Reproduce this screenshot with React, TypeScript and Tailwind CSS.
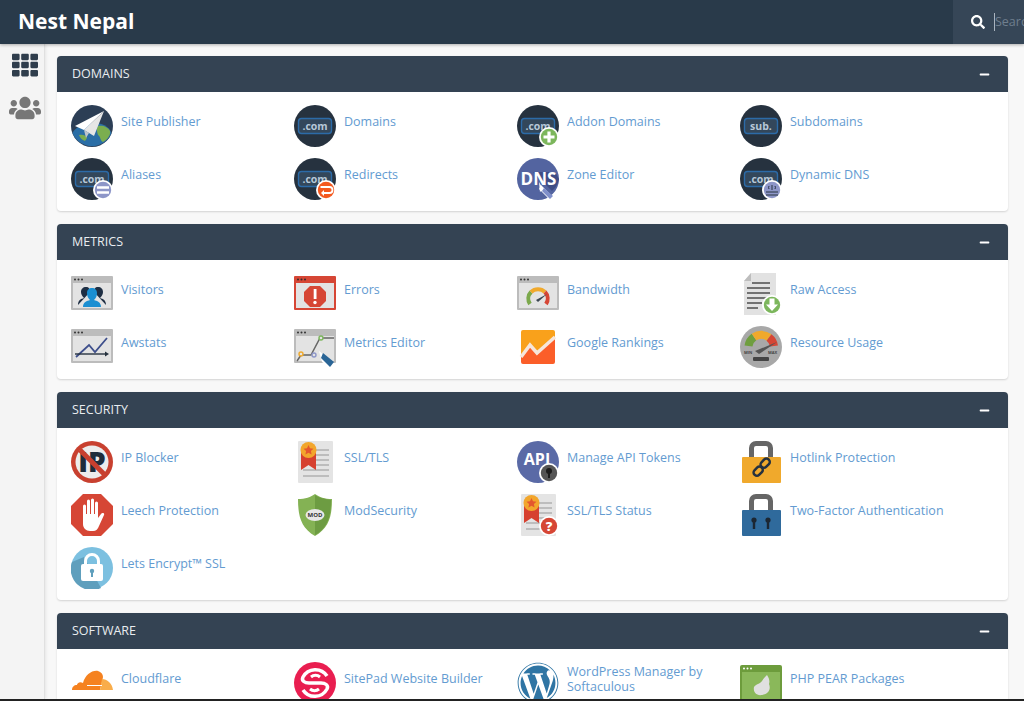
import type { ReactNode } from "react"
import { FaMinus, FaSearch, FaTh, FaUsers, FaWordpress } from "react-icons/fa"

function Icon({ children }: { children: ReactNode }) {
  return (
    <svg viewBox="0 0 42 42" className="h-[42px] w-[42px] shrink-0">
      {children}
    </svg>
  )
}

function Badge({ fill, children }: { fill: string; children?: ReactNode }) {
  return (
    <>
      <circle cx="32" cy="32" r="10" fill="#fff" />
      <circle cx="32" cy="32" r="8.2" fill={fill} />
      {children}
    </>
  )
}

function ComBase({ label = ".com" }: { label?: string }) {
  return (
    <>
      <circle cx="21" cy="21" r="21" fill="#26323f" />
      <rect x="4.5" y="13.5" width="33" height="15" rx="3" fill="#33475b" stroke="#2c6ba8" strokeWidth="1.4" />
      <text x="21" y="25" textAnchor="middle" fontSize="10.5" fontWeight="700" fill="#b7c8d8" fontFamily="Open Sans, sans-serif">
        {label}
      </text>
    </>
  )
}

function Win({ frame = "#bcbcbc", inner = "#e3e3e3", dots = "#333", children }: { frame?: string; inner?: string; dots?: string; children?: ReactNode }) {
  return (
    <>
      <rect x="0" y="3" width="42" height="34" rx="1" fill={frame} />
      <rect x="2" y="10" width="38" height="25" fill={inner} />
      <circle cx="4" cy="6.5" r="1" fill={dots} />
      <circle cx="7.5" cy="6.5" r="1" fill={dots} />
      <circle cx="11" cy="6.5" r="1" fill={dots} />
      {children}
    </>
  )
}

function Cert({ children }: { children?: ReactNode }) {
  return (
    <>
      <rect x="4" y="0" width="35" height="42" rx="1" fill="#e4e4e4" />
      <g stroke="#b0b0b0" strokeWidth="1.6">
        <path d="M21 9h14M21 14h14M21 19h14M21 24h14M9 29h26M9 35h26" />
      </g>
      <path d="M7 11h15v18l-7.500-5-7.500 5z" fill="#d6402f" />
      <circle cx="14.500" cy="9" r="8" fill="#f2a62c" />
      <path d="M14.500 4l1.500 3.300 3.500.4-2.600 2.400.7 3.500-3.100-1.800-3.100 1.800.7-3.500-2.600-2.400 3.500-.4z" fill="#e4572e" />
    </>
  )
}

function Lock({ body, children }: { body: string; children: ReactNode }) {
  return (
    <>
      <path d="M11.500 17V7a4.500 4.500 0 0 1 4.500-4.500h10a4.500 4.500 0 0 1 4.500 4.500v10" fill="none" stroke="#666" strokeWidth="5" />
      <rect x="2" y="16" width="39" height="26" rx="1" fill={body} />
      {children}
    </>
  )
}

const icons: Record<string, ReactNode> = {
  publisher: (
    <Icon>
      <circle cx="21" cy="21" r="21" fill="#2c3e55" />
      <path d="M1.500 28C6 18 34 12 40.500 28A21 21 0 0 1 1.500 28z" fill="#2a6ea6" />
      <path d="M27 21c5-1 10 1 12 5 1 4-3 9-7 11-3-1-2-5-5-7-1-3-2-6 0-9zM8 30c3-1 7 0 8 3l-2 3c-3-1-5-3-6-6z" fill="#7bae4f" />
      <path d="M33 6L4 21l9 4z" fill="#fff" />
      <path d="M33 6L13 25l10 6z" fill="#e6e6e6" />
      <path d="M13 25l2 8 3-5z" fill="#bfc5cc" />
    </Icon>
  ),
  domains: <Icon><ComBase /></Icon>,
  addon: (
    <Icon>
      <ComBase />
      <Badge fill="#7cb65c">
        <path d="M32 26.500v11M26.500 32h11" stroke="#fff" strokeWidth="3.200" />
      </Badge>
    </Icon>
  ),
  sub: <Icon><ComBase label="sub." /></Icon>,
  aliases: (
    <Icon>
      <ComBase />
      <Badge fill="#8d96c8">
        <path d="M26 29.500h12M26 34.500h12" stroke="#fff" strokeWidth="2.600" />
      </Badge>
    </Icon>
  ),
  redirects: (
    <Icon>
      <ComBase />
      <Badge fill="#f4591f">
        <path d="M26.500 29h9a2.500 2.500 0 0 1 0 6h-6" fill="none" stroke="#fff" strokeWidth="1.800" />
        <path d="M30 32l-3 3 3 3z" fill="#fff" />
      </Badge>
    </Icon>
  ),
  dns: (
    <Icon>
      <circle cx="21" cy="21" r="21" fill="#5364a0" />
      <path d="M35 33L16 14h22l4 7a21 21 0 0 1-7 12z" fill="#3f4d85" />
      <text x="21.500" y="27" textAnchor="middle" fontSize="17" fontWeight="700" fill="#fff" fontFamily="Open Sans, sans-serif">
        DNS
      </text>
      <path d="M22 24l1 10 3-3z" fill="#fff" />
      <path d="M24 27l11 11-3 3-10-10z" fill="#fff" />
      <path d="M27 30l9 8-3 3-8-8z" fill="#7f8fca" />
    </Icon>
  ),
  dynamic: (
    <Icon>
      <ComBase />
      <Badge fill="#8d96c8">
        <path d="M32 27v5M29 28a3 3 0 0 0 0 3M35 28a3 3 0 0 1 0 3M26 34h12M26 37h12" fill="none" stroke="#26323f" strokeWidth="1" />
      </Badge>
    </Icon>
  ),
  visitors: (
    <Icon>
      <Win>
        <path d="M7 32c0-5 3-6 6-7-2-2-3-4-3-6 0-3 2-5 5-5s4 2 4 5zM35 32c0-5-3-6-6-7 2-2 3-4 3-6 0-3-2-5-5-5s-4 2-4 5z" fill="#1f2f44" />
        <path d="M12 34c0-5 4-6 7-7-2-2-3-4-3-7 0-3 2-5 5-5s5 2 5 5c0 3-1 5-3 7 3 1 7 2 7 7z" fill="#1b8fd2" />
      </Win>
    </Icon>
  ),
  errors: (
    <Icon>
      <Win frame="#d64635" dots="#2f2f2f">
        <path d="M16 13h10l6 6v9l-6 6H16l-6-6v-9z" fill="#d64635" />
        <rect x="19.700" y="16" width="2.800" height="10" fill="#fff" />
        <circle cx="21" cy="29.500" r="1.700" fill="#fff" />
      </Win>
    </Icon>
  ),
  bandwidth: (
    <Icon>
      <Win>
        <path d="M13 31a9.500 9.500 0 0 1 1-12" fill="none" stroke="#7ba84b" strokeWidth="4" />
        <path d="M14 19a10 10 0 0 1 14 0" fill="none" stroke="#f0a92c" strokeWidth="4" />
        <path d="M28 19a9.500 9.500 0 0 1 1 12" fill="none" stroke="#d64635" strokeWidth="4" />
        <path d="M19 27l11-6-9 8z" fill="#3b4651" />
      </Win>
    </Icon>
  ),
  raw: (
    <Icon>
      <path d="M11 0h25v42H4V8z" fill="#e2e2e2" />
      <path d="M11 0v8H4z" fill="#bdbdbd" />
      <path d="M12 10h18M7 15h23M7 20h23M7 25h20M7 30h15M7 35h11" stroke="#4e4e4e" strokeWidth="1.500" />
      <Badge fill="#7cb65c">
        <path d="M29.500 25.500h5v6h3.500L32 38l-6-6.500h3.500z" fill="#fff" />
      </Badge>
    </Icon>
  ),
  awstats: (
    <Icon>
      <Win>
        <path d="M5 31l13-12 6 7 12-14" fill="none" stroke="#3e4f8c" strokeWidth="1.800" />
        <path d="M4 28h31" stroke="#26323f" strokeWidth="1.400" />
        <path d="M34 25.500l4 2.500-4 2.500z" fill="#26323f" />
      </Win>
    </Icon>
  ),
  metricsEditor: (
    <Icon>
      <Win>
        <path d="M3 35l4-6h10l9-17h14" fill="none" stroke="#666" strokeWidth="1.500" />
        <circle cx="7" cy="28" r="2" fill="#e3e3e3" stroke="#f0a92c" strokeWidth="1.400" />
        <circle cx="20" cy="29" r="2" fill="#e3e3e3" stroke="#8d96c8" strokeWidth="1.400" />
        <circle cx="27" cy="12" r="2" fill="#e3e3e3" stroke="#7cb65c" strokeWidth="1.400" />
        <path d="M25 25l16 13-4 4-9-6z" fill="#fff" />
        <path d="M29 27l11 9-4 5-9-9z" fill="#2a6596" />
      </Win>
    </Icon>
  ),
  rankings: (
    <Icon>
      <path d="M6 4h30a2 2 0 0 1 2 2v5L20 27l-7-8-9 12V6a2 2 0 0 1 2-2z" fill="#f9a11b" />
      <path d="M4 31l9-12 7 8 18-16v25a2 2 0 0 1-2 2H6a2 2 0 0 1-2-2z" fill="#fb5e29" />
      <path d="M4 31l9-12 7 8 18-16" fill="none" stroke="#f6e6da" strokeWidth="3.500" />
    </Icon>
  ),
  resource: (
    <Icon>
      <circle cx="21" cy="21" r="21" fill="#a8a8a8" />
      <path d="M8.500 20A13 13 0 0 1 14 11" fill="none" stroke="#6f9e3f" strokeWidth="8" />
      <path d="M14 11a13 13 0 0 1 15 .5" fill="none" stroke="#f0a92c" strokeWidth="8" />
      <path d="M29 11.500a13 13 0 0 1 5 8.500" fill="none" stroke="#d64635" strokeWidth="8" />
      <path d="M15 25l22-9-18 12z" fill="#555" />
      <text x="4" y="28" fontSize="4" fontWeight="700" fill="#444" fontFamily="Open Sans, sans-serif">MIN</text>
      <text x="28" y="28" fontSize="4" fontWeight="700" fill="#444" fontFamily="Open Sans, sans-serif">MAX</text>
      <rect x="13" y="31" width="16" height="4" rx="1" fill="#444" />
    </Icon>
  ),
  ipblocker: (
    <Icon>
      <circle cx="21" cy="21" r="21" fill="#c8402f" />
      <circle cx="21" cy="21" r="16.500" fill="#ececec" />
      <text x="21" y="31" textAnchor="middle" fontSize="28" fontWeight="800" fill="#1f2d3c" fontFamily="Open Sans, sans-serif">
        IP
      </text>
      <path d="M9 9l24 24" stroke="#c8402f" strokeWidth="5" />
    </Icon>
  ),
  ssl: <Icon><Cert /></Icon>,
  api: (
    <Icon>
      <circle cx="21" cy="21" r="21" fill="#5a6aa6" />
      <text x="20" y="24" textAnchor="middle" fontSize="16" fontWeight="700" fill="#fff" fontFamily="Open Sans, sans-serif">
        API
      </text>
      <circle cx="32" cy="32" r="10" fill="#fff" />
      <circle cx="32" cy="32" r="8.200" fill="#555" />
      <circle cx="32" cy="30" r="3" fill="#1c1c1c" />
      <rect x="31" y="31" width="2" height="6" fill="#1c1c1c" />
    </Icon>
  ),
  hotlink: (
    <Icon>
      <Lock body="#f0a92c">
        <g fill="none" stroke="#25313f" strokeWidth="2.500">
          <rect x="20" y="19" width="10" height="6.500" rx="3" transform="rotate(-45 25 22)" />
          <rect x="13" y="27" width="10" height="6.500" rx="3" transform="rotate(-45 18 30)" />
        </g>
      </Lock>
    </Icon>
  ),
  leech: (
    <Icon>
      <path d="M12 0h18l12 12v18L30 42H12L0 30V12z" fill="#d64635" />
      <path d="M12 24V12a1.500 1.500 0 0 1 3 0v8h1V7a1.500 1.500 0 0 1 3 0v13h1V6a1.500 1.500 0 0 1 3 0v14h1V9a1.500 1.500 0 0 1 3 0v15l3-4c1-2 4-1 3 1l-5 11c-1 3-3 5-6 5h-3c-4 0-7-3-7-7z" fill="#fff" />
    </Icon>
  ),
  mod: (
    <Icon>
      <path d="M21 0c4 3 10 5 17 5 0 17-3 29-17 37C7 34 4 22 4 5c7 0 13-2 17-5z" fill="#84b254" />
      <path d="M21 1c4 3 10 4 16 5 0 16-3 28-16 35z" fill="#6d9c42" />
      <ellipse cx="21" cy="21" rx="9.500" ry="6" fill="#e8e8e8" />
      <text x="21" y="23" textAnchor="middle" fontSize="6" fontWeight="700" fill="#333" fontFamily="Open Sans, sans-serif">
        MOD
      </text>
    </Icon>
  ),
  sslStatus: (
    <Icon>
      <Cert />
      <Badge fill="#d64635">
        <text x="32" y="36.500" textAnchor="middle" fontSize="13" fontWeight="800" fill="#fff" fontFamily="Open Sans, sans-serif">
          ?
        </text>
      </Badge>
    </Icon>
  ),
  twofactor: (
    <Icon>
      <Lock body="#2f6a9c">
        <g fill="#1c2733">
          <circle cx="14" cy="26" r="2.600" />
          <rect x="12.800" y="26" width="2.400" height="9" />
          <circle cx="28" cy="26" r="2.600" />
          <rect x="26.800" y="26" width="2.400" height="9" />
        </g>
      </Lock>
    </Icon>
  ),
  letsencrypt: (
    <Icon>
      <circle cx="21" cy="21" r="21" fill="#7cc0e0" />
      <path d="M1 15l12-5 17 31a21 21 0 0 1-29-26z" fill="#5f9fbd" />
      <path d="M14.500 18v-4a6.500 6.500 0 0 1 13 0v4" fill="none" stroke="#fff" strokeWidth="3" />
      <rect x="10" y="17" width="22" height="17" rx="2" fill="#fff" />
      <circle cx="21" cy="24" r="2.200" fill="#5f9fbd" />
      <rect x="20" y="25" width="2" height="5" fill="#5f9fbd" />
    </Icon>
  ),
  cloudflare: (
    <Icon>
      <path d="M1 28c0-3 2-5 5-5 0-2 3-4 6-2 2-8 9-13 15-12 3 1 5 3 5 6l-1 5-2 8z" fill="#f58220" />
      <path d="M31 17c5 0 10 4 11 11H29z" fill="#f9ad4a" />
      <path d="M16 23.500h15" stroke="#fff" strokeWidth="1" />
    </Icon>
  ),
  sitepad: (
    <Icon>
      <circle cx="21" cy="21" r="21" fill="#e91e50" />
      <path d="M33 14A14 14 0 0 0 9 15c-2 4 2 6 6 6h12c4 0 8 2 6 6A14 14 0 0 1 9 28" fill="none" stroke="#fff" strokeWidth="3.500" />
      <path d="M26 15a7 7 0 0 0-9 0M16 27a7 7 0 0 0 9 0" fill="none" stroke="#fff" strokeWidth="3" />
    </Icon>
  ),
  wordpress: <FaWordpress className="h-[42px] w-[42px] shrink-0 text-[#2f75a4]" />,
  pear: (
    <Icon>
      <rect x="0" y="3" width="42" height="39" rx="2" fill="#6d9c3c" />
      <rect x="2" y="10" width="38" height="32" fill="#8ab85a" />
      <circle cx="4" cy="6.500" r="1" fill="#fff" />
      <circle cx="7.500" cy="6.500" r="1" fill="#fff" />
      <circle cx="11" cy="6.500" r="1" fill="#fff" />
      <path d="M27 13c2 3 3 6 2 9 2 5 0 10-7 11-6 1-9-3-8-8 2-3 6-3 8-6 1-2 3-4 5-6z" fill="#e0e0e0" />
    </Icon>
  ),
}

const sections = [
  {
    title: "Domains",
    items: [
      ["publisher", "Site Publisher"],
      ["domains", "Domains"],
      ["addon", "Addon Domains"],
      ["sub", "Subdomains"],
      ["aliases", "Aliases"],
      ["redirects", "Redirects"],
      ["dns", "Zone Editor"],
      ["dynamic", "Dynamic DNS"],
    ],
  },
  {
    title: "Metrics",
    items: [
      ["visitors", "Visitors"],
      ["errors", "Errors"],
      ["bandwidth", "Bandwidth"],
      ["raw", "Raw Access"],
      ["awstats", "Awstats"],
      ["metricsEditor", "Metrics Editor"],
      ["rankings", "Google Rankings"],
      ["resource", "Resource Usage"],
    ],
  },
  {
    title: "Security",
    items: [
      ["ipblocker", "IP Blocker"],
      ["ssl", "SSL/TLS"],
      ["api", "Manage API Tokens"],
      ["hotlink", "Hotlink Protection"],
      ["leech", "Leech Protection"],
      ["mod", "ModSecurity"],
      ["sslStatus", "SSL/TLS Status"],
      ["twofactor", "Two-Factor Authentication"],
      ["letsencrypt", "Lets Encrypt™ SSL"],
    ],
  },
  {
    title: "Software",
    items: [
      ["cloudflare", "Cloudflare"],
      ["sitepad", "SitePad Website Builder"],
      ["wordpress", "WordPress Manager by Softaculous"],
      ["pear", "PHP PEAR Packages"],
    ],
  },
]

export default function App() {
  return (
    <div className="flex h-[701px] w-[1024px] flex-col overflow-hidden bg-[#f8f8f8] font-['Open_Sans',sans-serif]">
      {/* top bar */}
      <header className="relative z-10 flex h-[44px] shrink-0 items-center justify-between bg-[#293a4a] shadow-[0_1px_3px_rgba(0,0,0,0.3)]">
        <div className="pl-[18px] text-[21px] font-bold text-white">Nest Nepal</div>
        <div className="flex h-full w-[71px] items-center overflow-hidden bg-[#364657] pl-[18px]">
          <FaSearch className="h-[14px] w-[14px] shrink-0 text-white" />
          <span className="ml-[9px] border-l border-[#aab4bf] text-[12.5px] text-[#6f7e8e]">Search</span>
        </div>
      </header>

      <div className="flex min-h-0 flex-1">
        {/* sidebar */}
        <aside className="flex w-[45px] shrink-0 flex-col items-center border-r border-[#e0e0e0] bg-[#f4f4f4] pl-[5px] shadow-[1px_0_3px_rgba(0,0,0,0.08)]">
          <FaTh className="mt-[6px] h-[30px] w-[26px] text-[#2f3d4c]" />
          <FaUsers className="mt-[12px] h-[32px] w-[32px] text-[#777]" />
        </aside>

        <main className="flex min-w-0 flex-1 flex-col gap-[13px] pl-[12px] pt-[12px]">
          {sections.map((section) => (
            <section key={section.title} className="w-[951px] shrink-0 rounded-[4px] bg-white shadow-[0_1px_2px_rgba(0,0,0,0.15)]">
              <div className="flex h-[36px] items-center justify-between rounded-t-[4px] bg-[#344353] pl-[15px] pr-[18px]">
                <h2 className="pt-[1px] text-[12.5px] uppercase text-[#e9edf0]">{section.title}</h2>
                <FaMinus className="h-[11px] w-[11px] text-white" />
              </div>
              <div className="grid grid-cols-[repeat(4,223px)] px-[14px] pt-[13px]">
                {section.items.map(([icon, label]) => (
                  <a key={label} className="flex h-[53px] items-start gap-[8px]">
                    {icons[icon]}
                    <span className="flex h-[33px] w-[160px] items-center text-[12.5px] leading-[15px] text-[#639bd1]">
                      {label}
                    </span>
                  </a>
                ))}
              </div>
            </section>
          ))}
        </main>
      </div>
      <div className="h-[2px] shrink-0 bg-[#222]" />
    </div>
  )
}
